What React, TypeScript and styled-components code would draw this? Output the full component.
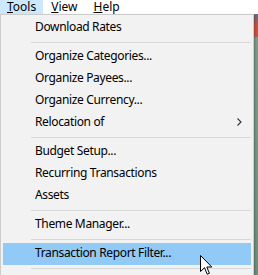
import React from 'react';
import styled, { createGlobalStyle } from 'styled-components';

const GlobalStyle = createGlobalStyle`
  html, body {
    margin: 0;
    padding: 0;
    width: 258px;
    height: 275px;
    overflow: hidden;
    background: #ffffff;
  }
`;

const Window = styled.div`
  position: relative;
  width: 258px;
  height: 275px;
  display: flex;
  flex-direction: column;
  font-family: 'Noto Sans', 'Open Sans', sans-serif;
  font-size: 12px;
  letter-spacing: -0.35px;
  color: #000;
  overflow: hidden;
`;

const MenuBar = styled.div`
  display: flex;
  height: 14px;
  background: #ffffff;
  flex-shrink: 0;
`;

const MenuBarItem = styled.div<{ $active?: boolean }>`
  box-sizing: border-box;
  height: 14px;
  padding: ${({ $active }) => ($active ? '0 7px' : '0 8px')};
  line-height: 14px;
  letter-spacing: 0;
  background: ${({ $active }) => ($active ? '#cce8ff' : 'transparent')};
  white-space: nowrap;

  u {
    text-decoration: underline;
    text-underline-offset: 1px;
  }
`;

const AppArea = styled.div`
  flex: 1;
  display: flex;
  justify-content: flex-end;
  background: #f0f0f0;
`;

const SideStrip = styled.div`
  width: 4px;
  background: linear-gradient(
    to bottom,
    #5a6f86 0px,
    #c8513d 12px,
    #c8513d 22px,
    #7d9b8b 24px,
    #6c8f7d 100%
  );
`;

const DropMenu = styled.div`
  position: absolute;
  left: 0;
  top: 14px;
  width: 254px;
  height: 280px;
  box-sizing: border-box;
  background: #f2f2f2;
  border: 1px solid #cccccc;
  padding: 2px;
  display: flex;
  flex-direction: column;
  box-shadow: 1px 1px 2px rgba(0, 0, 0, 0.25);
`;

const Item = styled.div<{ $hot?: boolean }>`
  box-sizing: border-box;
  height: 22px;
  line-height: 16px;
  padding: 0 0 2px 32px;
  display: flex;
  align-items: center;
  background: ${({ $hot }) => ($hot ? '#91c9f7' : 'transparent')};
  white-space: nowrap;
`;

const Label = styled.span`
  flex: 1;
`;

const Chevron = styled.svg`
  width: 5px;
  height: 8px;
  margin-right: 9px;
`;

const Separator = styled.div`
  height: 7px;
  display: flex;
  align-items: center;
  padding-left: 28px;

  &::after {
    content: '';
    flex: 1;
    height: 1px;
    background: #d7d7d7;
  }
`;

const Cursor = styled.svg`
  position: absolute;
  left: 200px;
  top: 255px;
  width: 13px;
  height: 21px;
`;

type Entry = { label?: string; sub?: boolean; hot?: boolean; sep?: boolean };

const entries: Entry[] = [
  { label: 'Download Rates' },
  { sep: true },
  { label: 'Organize Categories...' },
  { label: 'Organize Payees...' },
  { label: 'Organize Currency...' },
  { label: 'Relocation of', sub: true },
  { sep: true },
  { label: 'Budget Setup...' },
  { label: 'Recurring Transactions' },
  { label: 'Assets' },
  { sep: true },
  { label: 'Theme Manager...' },
  { sep: true },
  { label: 'Transaction Report Filter...', hot: true },
  { sep: true },
];

export default function App() {
  return (
    <>
      <GlobalStyle />
      <Window>
        <MenuBar>
          <MenuBarItem $active>
            <u>T</u>ools
          </MenuBarItem>
          <MenuBarItem>
            <u>V</u>iew
          </MenuBarItem>
          <MenuBarItem>
            <u>H</u>elp
          </MenuBarItem>
        </MenuBar>
        <AppArea>
          <SideStrip />
        </AppArea>

        <DropMenu>
          {entries.map((e, i) =>
            e.sep ? (
              <Separator key={i} />
            ) : (
              <Item key={i} $hot={e.hot}>
                <Label>{e.label}</Label>
                {e.sub && (
                  <Chevron viewBox="0 0 5 8">
                    <path d="M0.5 0.5 L4 4 L0.5 7.5" fill="none" stroke="#333" strokeWidth="1.1" />
                  </Chevron>
                )}
              </Item>
            )
          )}
        </DropMenu>

        <Cursor viewBox="0 0 13 21">
          <path
            d="M0.5 0.5 L0.5 16.5 L4.5 12.7 L7.2 19.2 L9.4 18.3 L6.8 12 L11.8 12 Z"
            fill="#fff"
            stroke="#000"
            strokeWidth="1"
            strokeLinejoin="round"
          />
        </Cursor>
      </Window>
    </>
  );
}
